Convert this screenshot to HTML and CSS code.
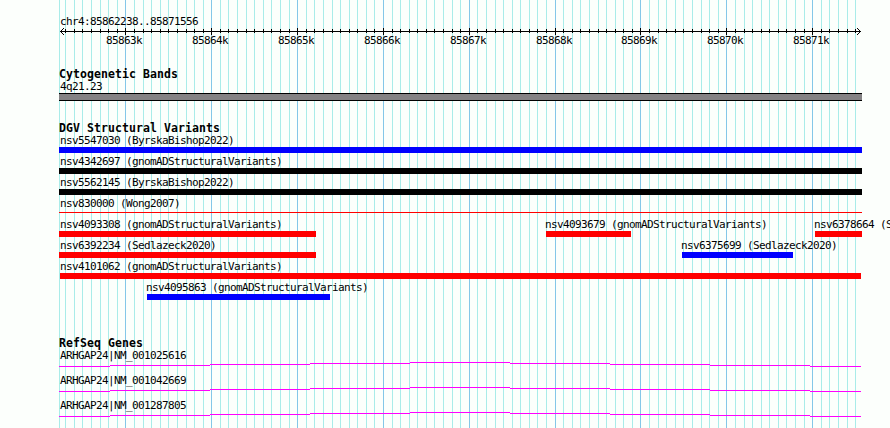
FILE: index.html
```html
<!DOCTYPE html>
<html lang="en">
<head>
<meta charset="utf-8">
<title>chr4:85862238..85871556</title>
<link rel="stylesheet" href="styles.css">
</head>
<body>
<main class="browser">
<svg class="grid" width="890" height="428" aria-hidden="true"><path id="minor" class="minor"/><path id="major" class="major"/></svg>
<section class="ruler">
<div class="region">chr4:85862238..85871556</div>
<svg class="axis" width="890" height="9"><path id="ticks"/><path d="M60 4.5H861M60.5 4v1M61.5 3v3M62.5 2v1M62.5 6v1M63.5 1v1M63.5 7v1M860.5 4v1M859.5 3v3M858.5 2v1M858.5 6v1M857.5 1v1M857.5 7v1"/></svg>
<div class="scale" id="scale"></div>
</section>
<section class="bands">
<h2>Cytogenetic Bands</h2>
<div class="label">4q21.23</div>
<div class="band"></div>
</section>
<section class="variants">
<h2>DGV Structural Variants</h2>
<div id="rows"></div>
</section>
<section class="genes">
<h2>RefSeq Genes</h2>
<div id="genes"></div>
</section>
</main>
<script src="main.js"></script>
</body>
</html>
```
FILE: styles.css
```css
body { margin: 0; background: #fcfffc; color: #000; overflow: hidden; }
.browser { position: relative; width: 890px; height: 428px; overflow: hidden; font: 11px/13px "DejaVu Sans Mono", monospace; letter-spacing: -0.622px; display: flex; flex-direction: column; }
section, .grid { flex: none; }
section { position: relative; }
.grid { position: absolute; left: 0; top: 0; }
svg { display: block; shape-rendering: crispEdges; }
path { fill: none; stroke: #000; }
.grid .minor { stroke: #a9ece9; }
.grid .major { stroke: #84c7e8; }
.ruler { height: 52px; padding-top: 15px; }
.region { margin-left: 60px; height: 12px; }
.scale { display: grid; height: 13px; }
.scale span { grid-area: 1 / 1; margin-top: -2px; }
h2 { margin: 0 0 0 59px; height: 12px; font: bold 11.5px/15px "DejaVu Sans Mono", monospace; letter-spacing: 0.077px; }
.bands { height: 54px; }
.bands h2 { height: 13px; }
.label { margin-left: 60px; height: 13px; }
.band { margin-left: 59px; width: 803px; height: 6px; border-top: 1px solid #000; border-bottom: 1px solid #000; background: #848284; }
.variants { height: 215px; }
.row { display: grid; height: 21px; }
.feature { grid-area: 1 / 1; white-space: nowrap; }
.name { display: block; height: 14px; line-height: 15px; margin-left: -1px; }
.edge .name { margin-left: 1px; }
.bar { display: block; height: 6px; }
.bar.thin { height: 1px; margin-top: 2px; }
.blue { background: #00f; }
.red { background: #f00; }
.black { background: #000; }
.gene { height: 25px; }
.gene .label { line-height: 15px; }
.gene path { stroke: #f0f; }
```
FILE: main.js
```javascript
const minor = [59,65,74,82,91,100,108,117,134,143,151,160,168,177,186,194,203,220,228,237,246,254,263,271,280,289,306,314,323,332,340,349,357,366,374,392,400,409,417,426,434,443,452,460,477,486,495,503,512,520,529,537,546,563,572,580,589,598,606,615,623,632,649,658,666,675,683,692,701,709,718,735,744,752,761,769,778,786,795,804,821,829,838,847,855];
const major = [125,211,297,383,469,555,640,726,812];
const lines = (xs, y, h) => xs.map(x => `M${x + 0.5} ${y}v${h}`).join('');
document.getElementById('minor').setAttribute('d', lines(minor, 0, 428));
document.getElementById('major').setAttribute('d', lines(major, 0, 428));
document.getElementById('ticks').setAttribute('d', lines(minor.slice(1), 2, 4) + lines(major, 1, 7));
document.getElementById('scale').innerHTML = major.map((x, i) => `<span style="margin-left:${x - 19}px">${85863 + i}k</span>`).join('');

// Each feature: name, left, right, colour.
const rows = [
  [['nsv5547030 (ByrskaBishop2022)', 59, 862, 'blue']],
  [['nsv4342697 (gnomADStructuralVariants)', 59, 862, 'black']],
  [['nsv5562145 (ByrskaBishop2022)', 59, 862, 'black']],
  [['nsv830000 (Wong2007)', 59, 862, 'red thin']],
  [['nsv4093308 (gnomADStructuralVariants)', 59, 316, 'red'], ['nsv4093679 (gnomADStructuralVariants)', 546, 631, 'red'], ['nsv6378664 (Sedlazeck2020)', 815, 862, 'red']],
  [['nsv6392234 (Sedlazeck2020)', 59, 316, 'red'], ['nsv6375699 (Sedlazeck2020)', 682, 793, 'blue']],
  [['nsv4101062 (gnomADStructuralVariants)', 60, 861, 'red']],
  [['nsv4095863 (gnomADStructuralVariants)', 147, 330, 'blue']]
];
document.getElementById('rows').innerHTML = rows.map(r => `<div class="row">${r.map(([n, a, b, c]) =>
  `<div class="feature${a === 59 ? ' edge' : ''}" style="margin-left:${a}px"><span class="name"${a === 60 ? ' style="margin-left:0"' : ''}>${n}</span><span class="bar ${c}" style="width:${b - a}px"></span></div>`).join('')}</div>`).join('');

const intron = 'M59 5.5H110M110 4.5H210M210 3.5H310M310 2.5H410M410 1.5H510M510 2.5H610M610 3.5H710M710 4.5H810M810 5.5H861';
document.getElementById('genes').innerHTML = ['001025616', '001042669', '001287805'].map(n =>
  `<div class="gene"><div class="label">ARHGAP24|NM_${n}</div><svg width="890" height="12"><path d="${intron}"/></svg></div>`).join('');
```
